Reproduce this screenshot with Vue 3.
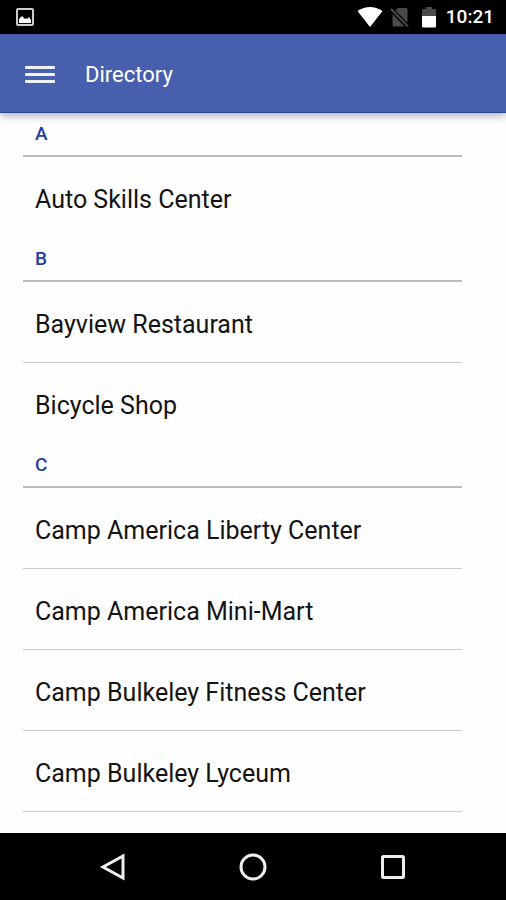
<template>
  <div class="screen">
    <div class="status-bar">
      <svg class="picture" viewBox="0 0 20 20" aria-hidden="true">
        <rect x="2" y="2" width="16" height="16" rx="1" />
        <path d="M4 16v-4l2-2 1-1 3 3 1-1 1 1 2-2 2 3v3z" />
      </svg>
      <div class="indicators">
        <svg class="wifi" viewBox="0 0 26 20" aria-hidden="true">
          <path d="M0.5 4Q13-4 25.500 4L13 20z" />
        </svg>
        <svg class="sim" viewBox="0 0 20 20" aria-hidden="true">
          <path d="M8 1h8q1.500 0 1.500 1.500v13L5.500 3.500zM2.500 7l12 12.500H4Q2.500 19.500 2.500 18z" />
          <path class="slash" d="M1 2l17 17.500" />
        </svg>
        <svg class="battery" viewBox="0 0 16 22" aria-hidden="true">
          <path class="empty" d="M1 10V4q0-1 1-1h3V1h6v2h3q1 0 1 1v6z" />
          <path d="M1 10h14v10q0 1.500-1 1.500H2q-1 0-1-1.500z" />
        </svg>
        <time>10:21</time>
      </div>
    </div>

    <header class="app-bar">
      <button type="button" class="menu" aria-label="Open menu">
        <i></i>
        <i></i>
        <i></i>
      </button>
      <h1>Directory</h1>
    </header>

    <main>
      <section v-for="group in groups" :key="group.letter">
        <h2>{{ group.letter }}</h2>
        <ul>
          <li v-for="place in group.places" :key="place">
            <a href="#">{{ place }}</a>
          </li>
        </ul>
      </section>
    </main>

    <nav class="nav-bar">
      <button type="button" aria-label="Back">
        <svg viewBox="0 0 28 28"><path d="M24 3v22L4 14z" /></svg>
      </button>
      <button type="button" aria-label="Home">
        <svg viewBox="0 0 28 28"><circle cx="14" cy="14" r="12" /></svg>
      </button>
      <button type="button" aria-label="Recent apps">
        <svg viewBox="0 0 28 28">
          <rect x="3.500" y="3.500" width="21" height="21" rx="1" />
        </svg>
      </button>
    </nav>
  </div>
</template>

<script setup>
const groups = [
  { letter: "A", places: ["Auto Skills Center"] },
  { letter: "B", places: ["Bayview Restaurant", "Bicycle Shop"] },
  {
    letter: "C",
    places: [
      "Camp America Liberty Center",
      "Camp America Mini-Mart",
      "Camp Bulkeley Fitness Center",
      "Camp Bulkeley Lyceum",
    ],
  },
];
</script>

<style>
body {
  margin: 0;
}
</style>

<style scoped>
.screen {
  display: flex;
  flex-direction: column;
  height: 100vh;
  background: #fefefe;
  font-family: Roboto, sans-serif;
}
h1,
h2,
ul {
  margin: 0;
  padding: 0;
}
button {
  border: 0;
  padding: 0;
  background: none;
}
.status-bar {
  flex: none;
  display: flex;
  align-items: center;
  justify-content: space-between;
  height: 34px;
  padding: 0 12px 0 15px;
  background: #000;
  color: #fff;
}
.indicators {
  display: flex;
  align-items: center;
}
.status-bar svg {
  fill: #fff;
}
.picture {
  width: 20px;
  height: 20px;
}
.status-bar .picture rect {
  fill: none;
  stroke: #ccc;
  stroke-width: 2;
}
.wifi {
  width: 26px;
  height: 20px;
}
.status-bar .sim {
  width: 20px;
  height: 20px;
  margin-left: 7px;
  fill: #4a4a4a;
}
.slash {
  stroke: #4a4a4a;
  stroke-width: 2;
}
.battery {
  width: 16px;
  height: 22px;
  margin-left: 11px;
}
.status-bar .empty {
  fill: #4a4a4a;
}
time {
  margin-left: 9px;
  font-size: 19px;
  font-weight: 500;
  line-height: 24px;
}
.app-bar {
  flex: none;
  z-index: 1;
  display: flex;
  align-items: center;
  gap: 30px;
  box-sizing: border-box;
  height: 79px;
  padding: 2px 25px 0;
  background: #485fae;
  border-bottom: 1px solid #2545a0;
  box-shadow: 0 3px 8px rgba(0, 0, 0, 0.3);
  color: #fff;
}
.menu {
  display: flex;
  flex-direction: column;
  gap: 4px;
  width: 30px;
}
.menu i {
  height: 3px;
  border-radius: 1px;
  background: #f0f2fa;
}
h1 {
  font-size: 22px;
  font-weight: 400;
}
main {
  flex: 1;
  min-height: 0;
  overflow: hidden;
  padding: 0 44px 0 23px;
}
h2 {
  box-sizing: border-box;
  height: 44px;
  padding: 0 12px;
  border-bottom: 2px solid #bcbcbc;
  color: #1f3fa5;
  font-size: 19px;
  font-weight: 500;
  line-height: 42px;
}
ul {
  list-style: none;
}
li {
  box-sizing: border-box;
  height: 81px;
  border-bottom: 1px solid #cacaca;
}
section:not(:last-child) li:last-child {
  border-color: transparent;
}
a {
  display: block;
  padding: 6px 12px 0;
  color: #141414;
  font-size: 25px;
  line-height: 74px;
  text-decoration: none;
}
.nav-bar {
  flex: none;
  display: flex;
  align-items: center;
  justify-content: space-around;
  height: 67px;
  padding: 0 43px;
  background: #000;
}
.nav-bar button {
  height: 28px;
}
.nav-bar svg {
  width: 28px;
  height: 28px;
  fill: none;
  stroke: #eee;
  stroke-width: 3;
}
</style>
